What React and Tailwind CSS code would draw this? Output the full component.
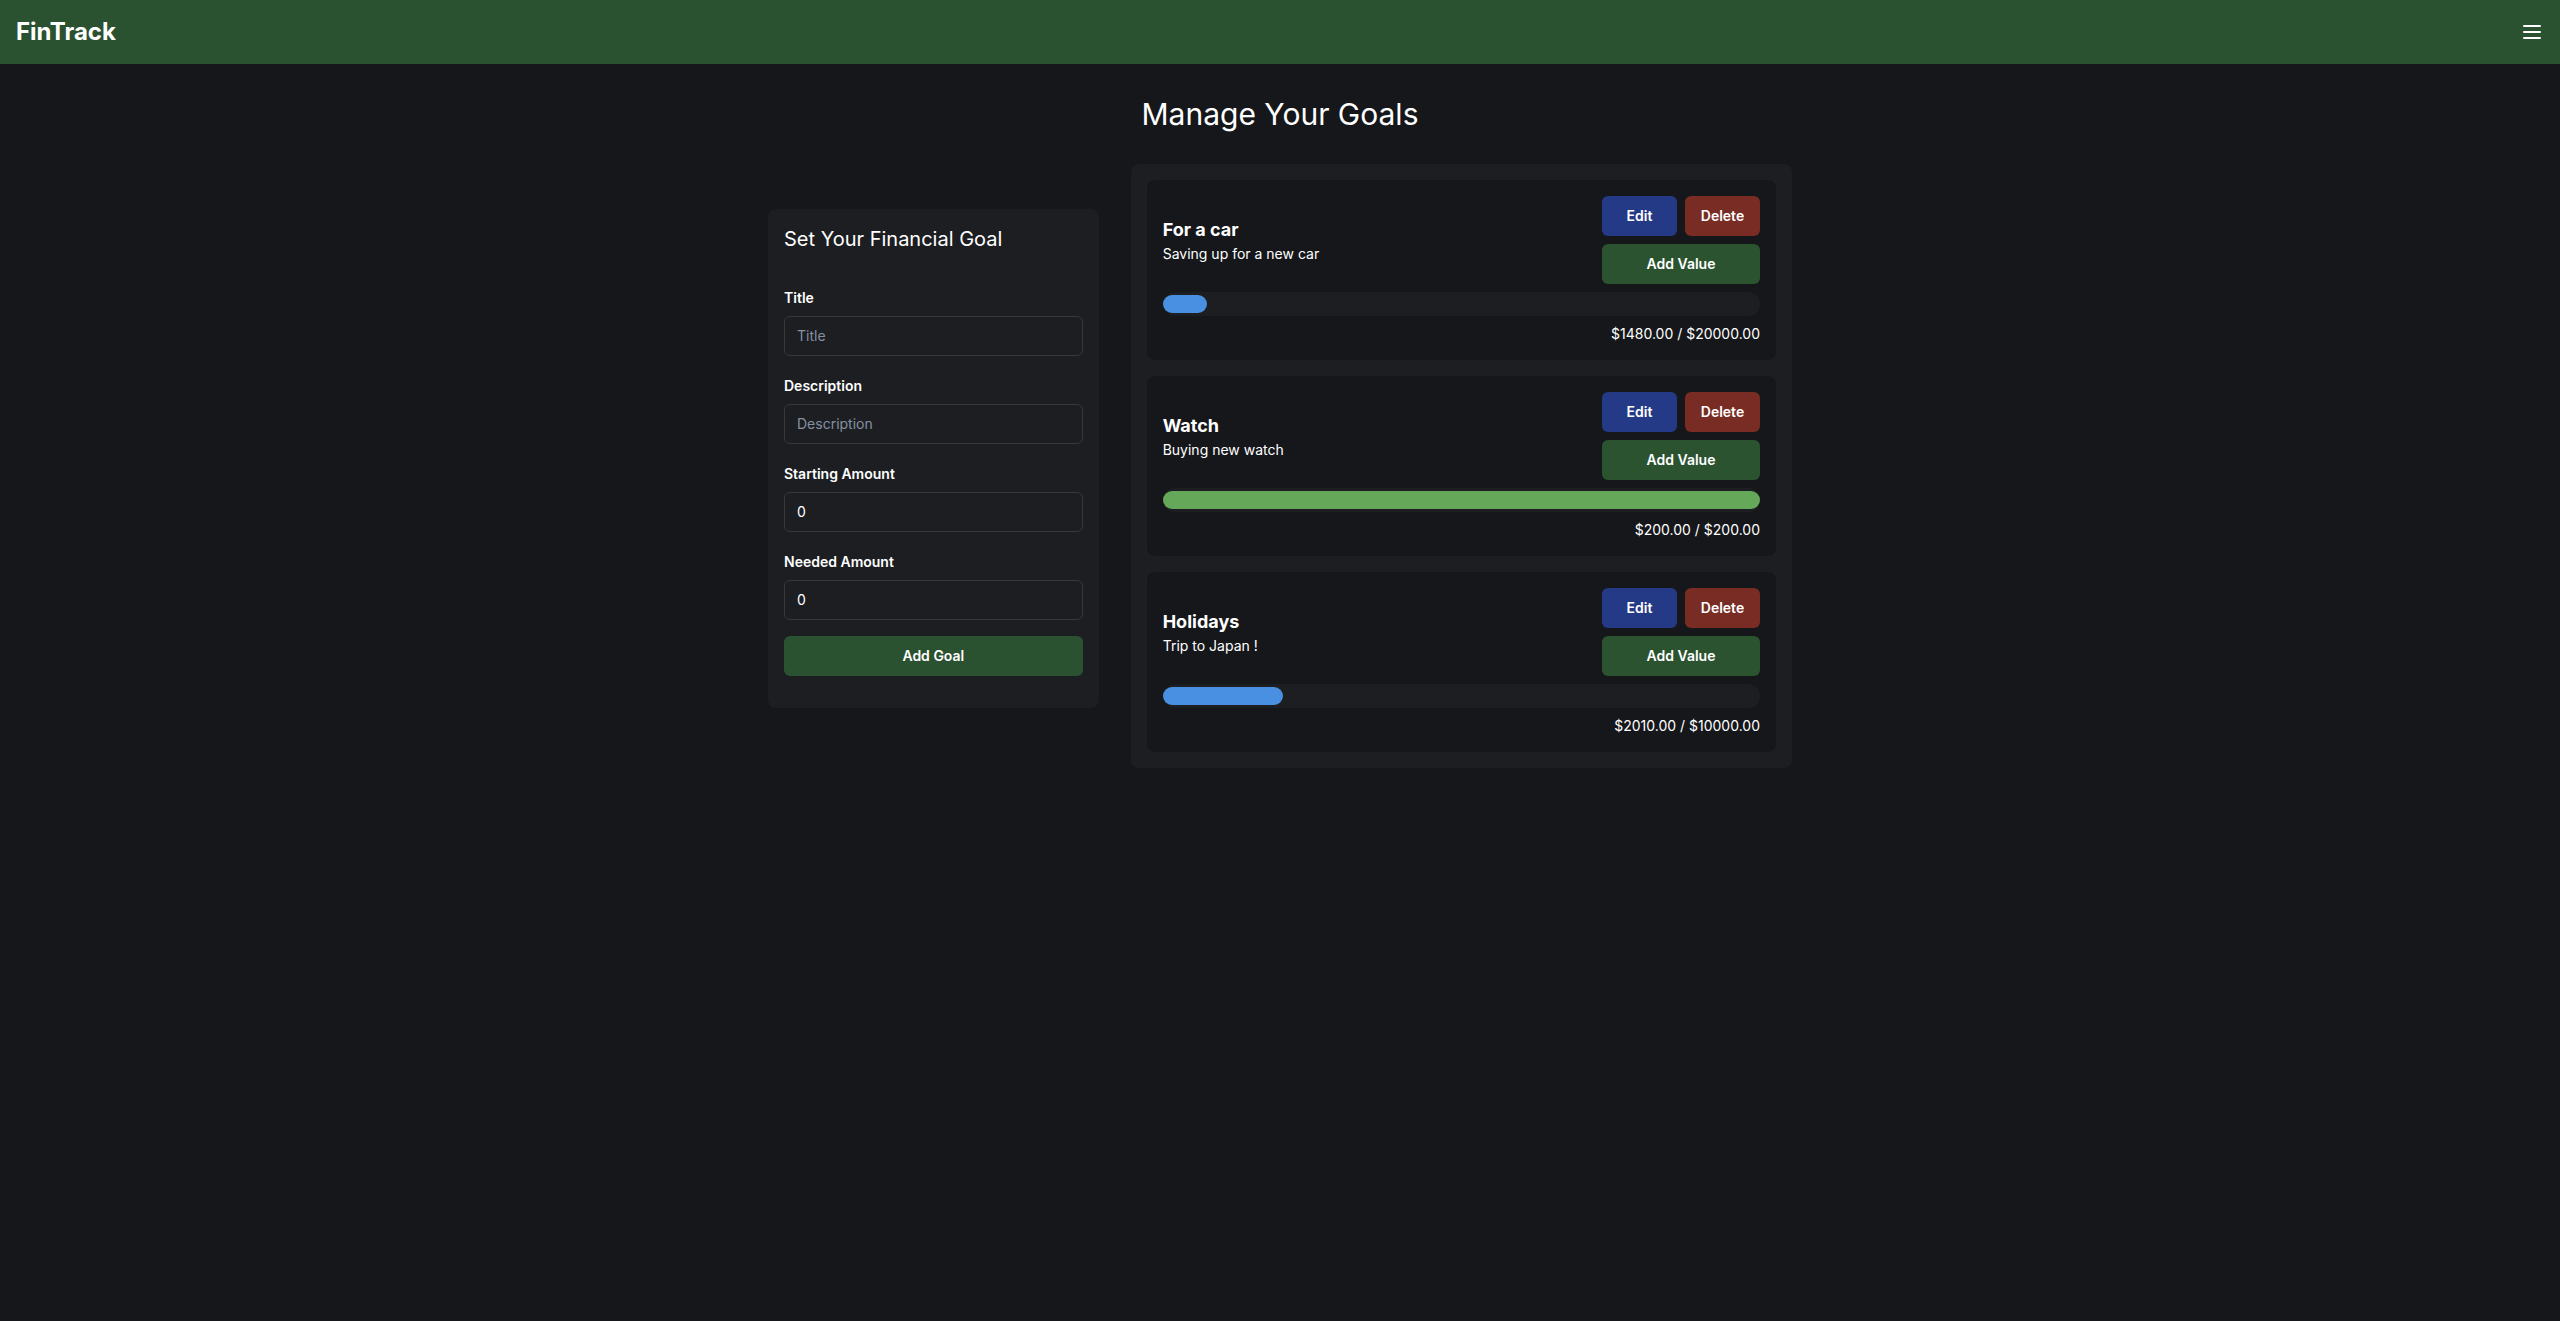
import { useState } from 'react';

const goals = [
  { id: 1, title: 'For a car', description: 'Saving up for a new car', current: 1480, target: 20000 },
  { id: 2, title: 'Watch', description: 'Buying new watch', current: 200, target: 200 },
  { id: 3, title: 'Holidays', description: 'Trip to Japan !', current: 2010, target: 10000 },
];

function Header() {
  return (
    <header className="h-16 bg-[#2b5230] flex items-center justify-between px-4">
      <span className="text-2xl font-bold text-white">FinTrack</span>
      <button className="w-6 h-6 flex flex-col items-center justify-center gap-[4px]">
        <span className="block w-[18px] h-[2px] bg-white rounded-sm" />
        <span className="block w-[18px] h-[2px] bg-white rounded-sm" />
        <span className="block w-[18px] h-[2px] bg-white rounded-sm" />
      </button>
    </header>
  );
}

function Field({ label, placeholder, value, onChange, type = 'text' }) {
  return (
    <div className="mb-5">
      <label className="block text-sm font-semibold text-white mb-2">{label}</label>
      <input
        type={type}
        value={value}
        placeholder={placeholder}
        onChange={(e) => onChange(e.target.value)}
        className="w-full h-10 px-3 rounded-md bg-[#1d1e22] border border-[#37393e] text-sm text-white placeholder:text-[#8590a0] outline-none"
      />
    </div>
  );
}

function GoalForm() {
  const [title, setTitle] = useState('');
  const [description, setDescription] = useState('');
  const [start, setStart] = useState('0');
  const [needed, setNeeded] = useState('0');

  return (
    <div className="bg-[#1d1e22] rounded-lg p-4 pb-8 mb-4">
      <h2 className="text-xl text-white mb-[35px]">Set Your Financial Goal</h2>
      <Field label="Title" placeholder="Title" value={title} onChange={setTitle} />
      <Field label="Description" placeholder="Description" value={description} onChange={setDescription} />
      <Field label="Starting Amount" value={start} onChange={setStart} />
      <div>
        <label className="block text-sm font-semibold text-white mb-2">Needed Amount</label>
        <input
          value={needed}
          onChange={(e) => setNeeded(e.target.value)}
          className="w-full h-10 px-3 rounded-md bg-[#1d1e22] border border-[#37393e] text-sm text-white outline-none"
        />
      </div>
      <button className="mt-4 w-full h-10 rounded-md bg-[#2b5230] text-sm font-semibold text-white">
        Add Goal
      </button>
    </div>
  );
}

function GoalCard({ goal }) {
  const pct = Math.min(100, (goal.current / goal.target) * 100);
  const done = goal.current >= goal.target;
  return (
    <div className="bg-[#16171b] rounded-lg p-4">
      <div className="flex items-center justify-between">
        <div>
          <h3 className="text-lg font-bold text-white">{goal.title}</h3>
          <p className="text-sm text-white">{goal.description}</p>
        </div>
        <div className="grid grid-cols-2 gap-2 w-[158px]">
          <button className="h-10 rounded-md bg-[#253a87] text-sm font-semibold text-white">Edit</button>
          <button className="h-10 rounded-md bg-[#782c24] text-sm font-semibold text-white">Delete</button>
          <button className="col-span-2 h-10 rounded-md bg-[#2b5330] text-sm font-semibold text-white">Add Value</button>
        </div>
      </div>
      <div className="mt-2 h-6 rounded-full bg-[#1d1e22] flex items-center">
        <div
          className={`h-[18px] rounded-full ${done ? 'bg-[#66a85a]' : 'bg-[#4a90e2]'}`}
          style={{ width: `${pct}%` }}
        />
      </div>
      <p className="mt-2 text-sm text-white text-right">
        ${goal.current.toFixed(2)} / ${goal.target.toFixed(2)}
      </p>
    </div>
  );
}

export default function App() {
  return (
    <div className="min-h-screen bg-[#16171b] font-['Inter',sans-serif]">
      <Header />
      <main className="py-8">
        <h1 className="text-3xl text-white text-center mb-8">Manage Your Goals</h1>
        <div className="max-w-5xl mx-auto grid grid-cols-[1fr_2fr] gap-8 items-center">
          <div>
            <GoalForm />
          </div>
          <div className="bg-[#1d1e22] rounded-lg p-4 flex flex-col gap-4">
            {goals.map((g) => (
              <GoalCard key={g.id} goal={g} />
            ))}
          </div>
        </div>
      </main>
    </div>
  );
}
